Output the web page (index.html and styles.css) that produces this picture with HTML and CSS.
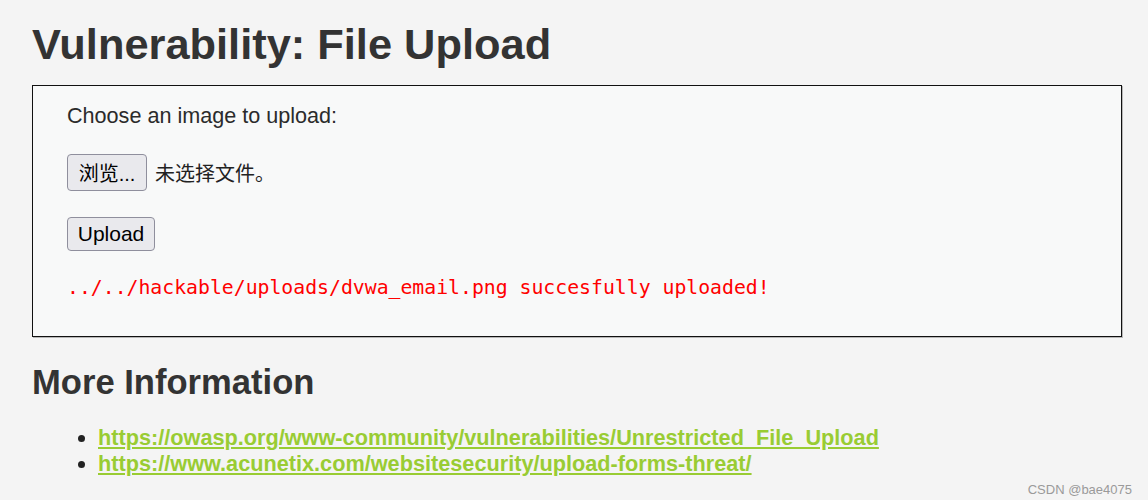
FILE: index.html
```html
<!DOCTYPE html>
<html lang="en">
<head>
<meta charset="utf-8">
<title>Vulnerability: File Upload</title>
<link rel="stylesheet" href="styles.css">
</head>
<body>
<div class="page">
  <h1 class="title">Vulnerability: File Upload</h1>
  <div class="vulnerable-code">
    <form class="upload-form">
      <p class="label">Choose an image to upload:</p>
      <div class="file-row">
        <button type="button" class="btn btn-browse">浏览...</button>
        <span class="no-file">未选择文件。</span>
      </div>
      <div class="submit-row">
        <button type="button" class="btn btn-upload">Upload</button>
      </div>
    </form>
    <pre class="result">../../hackable/uploads/dvwa_email.png succesfully uploaded!</pre>
  </div>
  <h2 class="subtitle">More Information</h2>
  <ul class="links">
    <li><a href="#">https://owasp.org/www-community/vulnerabilities/Unrestricted_File_Upload</a></li>
    <li><a href="#">https://www.acunetix.com/websitesecurity/upload-forms-threat/</a></li>
  </ul>
</div>
<div class="watermark">CSDN @bae4075</div>
</body>
</html>
```

FILE: styles.css
```css
html, body {
  margin: 0;
  padding: 0;
  background: #f4f4f4;
}
body {
  font-family: "Liberation Sans", Arial, sans-serif;
  color: #2b2b2b;
  height: 500px;
  overflow: hidden;
  position: relative;
}
.page {
  padding: 19px 26px 0 32px;
}
.title {
  margin: 0;
  font-size: 43.4px;
  line-height: 50px;
  font-weight: bold;
  color: #333;
}
.vulnerable-code {
  margin-top: 16px;
  border: 1px solid #111;
  background: #f8f9f9;
  padding: 18px 34px 0 34px;
  height: 232px;
  box-shadow: 1px 1px 0 rgba(0,0,0,0.25);
}
.upload-form {
  margin: 0;
}
.label {
  margin: 0;
  font-size: 21.6px;
  line-height: 24px;
  color: #2b2b2b;
}
.file-row {
  margin-top: 26px;
  display: flex;
  align-items: center;
  gap: 8px;
}
.btn {
  font-family: "Liberation Sans", Arial, "Noto Sans CJK SC", sans-serif;
  font-size: 21px;
  color: #000;
  background: #e9e9ed;
  border: 1px solid #8f8f9d;
  border-radius: 4px;
  padding: 0 9px;
  margin: 0;
  box-sizing: border-box;
}
.btn-browse {
  height: 37px;
  width: 80px;
  font-size: 20px;
}
.no-file {
  font-family: "Noto Sans CJK SC", sans-serif;
  font-size: 20px;
  color: #222;
  line-height: 37px;
}
.submit-row {
  margin-top: 26px;
}
.btn-upload {
  height: 34px;
  width: 88px;
}
.result {
  margin: 23px 0 0 0;
  font-family: "DejaVu Sans Mono", monospace;
  font-size: 19.8px;
  line-height: 28px;
  color: #ff0000;
}
.subtitle {
  margin: 24px 0 0 0;
  font-size: 34.6px;
  line-height: 42px;
  font-weight: bold;
  color: #333;
}
.links {
  margin: 22px 0 0 0;
  padding-left: 66px;
  font-size: 21.7px;
  line-height: 26px;
  font-weight: bold;
}
.links li::marker {
  color: #222;
}
.links a {
  color: #99cc33;
  text-decoration: underline;
}
.watermark {
  position: absolute;
  right: 16px;
  bottom: 3px;
  font-family: "Liberation Sans", Arial, sans-serif;
  font-size: 13px;
  color: #9a9a9a;
}
```
